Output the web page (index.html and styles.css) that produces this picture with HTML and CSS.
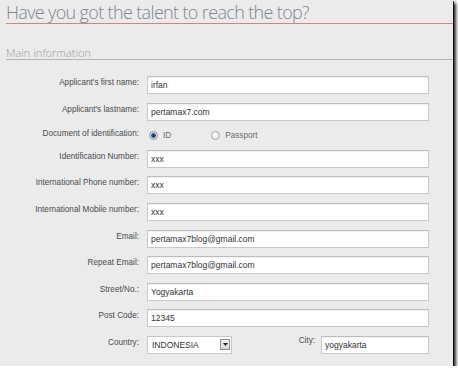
FILE: index.html
```html
<!DOCTYPE html>
<html lang="en">
<head>
  <meta charset="UTF-8" />
  <title>Have you got the talent to reach the top?</title>
  <link rel="stylesheet" href="styles.css">
</head>
<body>
  <div class="sheet">
    <h1 class="title">Have you got the talent to reach the top?</h1>
    <h2 class="section">Main information</h2>

    <form class="apply">
      <label class="lbl" for="firstName">Applicant's first name:</label>
      <input class="field" id="firstName" type="text" value="irfan" />

      <label class="lbl" for="lastName">Applicant's lastname:</label>
      <input class="field" id="lastName" type="text" value="pertamax7.com" />

      <span class="lbl lbl-radio">Document of identification:</span>
      <div class="radios">
        <label class="radio"><span class="dot checked"></span>ID</label>
        <label class="radio"><span class="dot"></span>Passport</label>
      </div>

      <label class="lbl" for="idNumber">Identification Number:</label>
      <input class="field" id="idNumber" type="text" value="xxx" />

      <label class="lbl" for="phone">International Phone number:</label>
      <input class="field" id="phone" type="text" value="xxx" />

      <label class="lbl" for="mobile">International Mobile number:</label>
      <input class="field" id="mobile" type="text" value="xxx" />

      <label class="lbl" for="email">Email:</label>
      <input class="field" id="email" type="text" value="pertamax7blog@gmail.com" />

      <label class="lbl" for="email2">Repeat Email:</label>
      <input class="field" id="email2" type="text" value="pertamax7blog@gmail.com" />

      <label class="lbl" for="street">Street/No.:</label>
      <input class="field" id="street" type="text" value="Yogyakarta" />

      <label class="lbl" for="postCode">Post Code:</label>
      <input class="field" id="postCode" type="text" value="12345" />

      <span class="lbl">Country:</span>
      <div class="last-row">
        <div class="select">
          <span class="select-value">INDONESIA</span>
          <span class="select-btn">
            <svg width="5" height="3" viewBox="0 0 5 3"><path d="M0 0H5L2.5 3Z" fill="#222"/></svg>
          </span>
        </div>
        <label class="lbl city-lbl" for="city">City:</label>
        <input class="field city" id="city" type="text" value="yogyakarta" />
      </div>
    </form>
  </div>
</body>
</html>
```

FILE: styles.css
```css
html, body {
  margin: 0;
  padding: 0;
  background: #fff;
}

.sheet {
  width: 453px;
  height: 366px;
  background: #ebebeb;
  box-shadow: 3px 3px 3px rgba(0, 0, 0, 0.85), 1px 1px 0 #444;
  overflow: hidden;
  font-family: "Liberation Sans", Arial, sans-serif;
}

.title {
  margin: 0 0 0 6px;
  padding: 1px 0 0 0;
  height: 22px;
  border-bottom: 1px solid #d98080;
  font-family: "Open Sans", sans-serif;
  font-weight: 300;
  font-size: 18px;
  letter-spacing: -0.65px;
  line-height: 22px;
  color: #7f8691;
}

.section {
  margin: 22px 0 0 6px;
  height: 13px;
  border-bottom: 1px solid #b4b4b4;
  font-family: "Open Sans", sans-serif;
  font-weight: 300;
  font-size: 11px;
  line-height: 13px;
  color: #9c9c9c;
}

.apply {
  display: grid;
  grid-template-columns: 139px 282px;
  grid-template-rows: 18px 18px 12px repeat(8, 18px);
  column-gap: 8px;
  row-gap: 8.6px;
  margin-top: 16px;
}

.lbl {
  text-align: right;
  font-size: 8.2px;
  line-height: 12px;
  padding-top: 1px;
  color: #4a4c50;
}

.lbl-radio {
  margin-top: -1px;
  padding-top: 0;
}

.field {
  box-sizing: border-box;
  height: 18px;
  margin: 0;
  padding: 0 3px;
  border: 1px solid #c8c8c8;
  border-top-color: #bdbdbd;
  background: #fff;
  box-shadow: inset 0 1px 1px rgba(0, 0, 0, 0.06);
  font-family: "Liberation Sans", Arial, sans-serif;
  font-size: 8.5px;
  color: #333;
  outline: none;
}

.radios {
  display: flex;
  align-items: center;
  padding-left: 2px;
}

.radio {
  display: flex;
  align-items: center;
  font-size: 8.2px;
  color: #6a6a6a;
}

.radio + .radio {
  margin-left: 40px;
}

.dot {
  box-sizing: border-box;
  width: 9px;
  height: 9px;
  margin-right: 5px;
  border-radius: 50%;
  border: 1px solid #a8a8a8;
  background: radial-gradient(circle at 40% 35%, #fff, #dcdcdc);
}

.dot.checked {
  border-color: #8a96a8;
  background: radial-gradient(circle, #233c6a 0, #2c4a82 2px, #cfd6e2 2.5px, #f2f4f7 4px);
}

.last-row {
  display: flex;
  align-items: flex-start;
}

.select {
  box-sizing: border-box;
  display: flex;
  align-items: center;
  width: 85px;
  height: 18px;
  border: 1px solid #c8c8c8;
  background: #fff;
  padding: 0 1px 0 4px;
}

.select-value {
  flex: 1;
  font-size: 8.5px;
  color: #333;
}

.select-btn {
  box-sizing: border-box;
  display: flex;
  align-items: center;
  justify-content: center;
  width: 10px;
  height: 11px;
  border: 1px solid #8f8f8f;
  background: linear-gradient(#f4f4f4, #d4d4d4);
}

.city-lbl {
  margin-left: auto;
  margin-top: -2px;
}

.city {
  width: 108px;
  margin-left: 6px;
}
```
